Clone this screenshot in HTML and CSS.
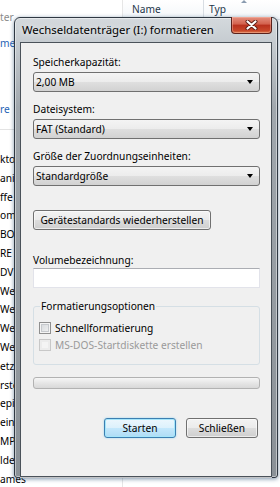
FILE: index.html
```html
<!DOCTYPE html>
<html lang="de">
<head>
    <meta charset="UTF-8">
    <title>Wechseldatenträger (I:) formatieren</title>
    <link rel="stylesheet" href="styles.css">
</head>
<body>

    <!-- Explorer-Fenster im Hintergrund -->
    <div class="explorer">
        <div class="topbar"></div>
        <div class="explorer-body">
            <div class="nav">
                <div class="nav-hint">ter</div>
                <a href="#" class="nav-link link-top">me</a>
                <a href="#" class="nav-link link-bottom">re</a>
                <div class="nav-sep"></div>
                <ul class="nav-list">
                    <li>kto</li>
                    <li>ani</li>
                    <li>ffe</li>
                    <li>om</li>
                    <li>BO</li>
                    <li>RE</li>
                    <li>DV</li>
                    <li>We</li>
                    <li>We</li>
                    <li>We</li>
                    <li>We</li>
                    <li>etz</li>
                    <li>rste</li>
                    <li>epi</li>
                    <li>ein</li>
                    <li>MP</li>
                    <li>lde</li>
                    <li>ames</li>
                </ul>
            </div>
            <div class="files">
                <div class="col-head">
                    <div class="col col-name">Name</div>
                    <div class="col col-type">Typ<span class="sort"></span></div>
                </div>
            </div>
        </div>
    </div>

    <!-- Formatieren-Dialog -->
    <div class="dialog">
        <div class="titlebar">
            <span class="title">Wechseldatenträger (I:) formatieren</span>
            <button class="close-btn" aria-label="Schließen">
                <svg width="13" height="10" viewBox="0 0 13 10">
                    <path d="M2.5 1.5 L10.5 8.5 M10.5 1.5 L2.5 8.5" stroke="#5a1b14" stroke-width="4" stroke-linecap="round"/>
                    <path d="M2.5 1.5 L10.5 8.5 M10.5 1.5 L2.5 8.5" stroke="#fff" stroke-width="2.2" stroke-linecap="round"/>
                </svg>
            </button>
        </div>

        <div class="client">
            <label class="field-label">Speicherkapazität:</label>
            <div class="combo"><span>2,00 MB</span><span class="arrow"></span></div>

            <label class="field-label">Dateisystem:</label>
            <div class="combo"><span>FAT (Standard)</span><span class="arrow"></span></div>

            <label class="field-label">Größe der Zuordnungseinheiten:</label>
            <div class="combo"><span>Standardgröße</span><span class="arrow"></span></div>

            <button class="btn restore-btn">Gerätestandards wiederherstellen</button>

            <label class="field-label volume-label">Volumebezeichnung:</label>
            <input class="text-input" type="text" value="">

            <div class="group">
                <div class="group-title">Formatierungsoptionen</div>
                <div class="check-row">
                    <span class="checkbox"></span>
                    <span>Schnellformatierung</span>
                </div>
                <div class="check-row disabled">
                    <span class="checkbox"></span>
                    <span>MS-DOS-Startdiskette erstellen</span>
                </div>
            </div>

            <div class="progress"></div>

            <div class="button-row">
                <button class="btn btn-default">Starten</button>
                <button class="btn">Schließen</button>
            </div>
        </div>
    </div>

</body>
</html>
```

FILE: styles.css
```css
body {
    margin: 0;
    width: 280px;
    height: 487px;
    overflow: hidden;
    position: relative;
    background-color: #fff;
    font-family: 'Noto Sans', 'Open Sans', sans-serif;
    font-size: 10.2px;
    color: #000;
}

/* ---------- Explorer im Hintergrund ---------- */

.explorer {
    height: 487px;
    display: flex;
    flex-direction: column;
}

.topbar {
    height: 3px;
    background-color: #18222e;
}

.explorer-body {
    flex: 1;
    display: flex;
}

.nav {
    width: 123px;
    border-right: 1px solid #e6e6e6;
    padding-top: 10px;
    box-sizing: border-box;
    overflow: hidden;
    white-space: nowrap;
}

.nav-hint {
    line-height: 14px;
    color: #8a8a8a;
}

.nav-link {
    display: block;
    line-height: 14px;
    color: #1f63b5;
    text-decoration: none;
}
.nav-link.link-top {
    margin-top: 12px;
}
.nav-link.link-bottom {
    margin-top: 52px;
}

.nav-sep {
    height: 1px;
    background-color: #e3e3e3;
    margin-top: 13px;
}

.nav-list {
    list-style-type: none;
    margin: 20px 0 0 0;
    padding: 0;
}
.nav-list li {
    height: 18.8px;
    line-height: 18.8px;
}

.files {
    flex: 1;
}

.col-head {
    display: flex;
    height: 19px;
    background: linear-gradient(#ffffff, #f3f6f9);
    border-bottom: 1px solid #d8dde3;
}

.col {
    line-height: 19px;
    color: #24364a;
}
.col-name {
    width: 71px;
    padding-left: 9px;
    border-right: 1px solid #d8dde3;
}
.col-type {
    flex: 1;
    padding-left: 5px;
    position: relative;
}
.col-type .sort {
    position: absolute;
    left: 37px;
    top: 0;
    width: 0;
    height: 0;
    border-left: 3px solid transparent;
    border-right: 3px solid transparent;
    border-bottom: 3px solid #8a9bb0;
}

/* ---------- Dialogfenster ---------- */

.dialog {
    position: absolute;
    left: 14px;
    top: 17px;
    width: 264px;
    height: 461px;
    box-sizing: border-box;
    border: 1px solid #2f3842;
    border-radius: 6px 6px 3px 3px;
    background: linear-gradient(#d4d9dd 0, #c6ccd1 24px, #a0a7ad 90px, #8a9197 100%);
    box-shadow: 0 1px 4px rgba(20, 60, 100, 0.55), inset 0 0 0 1px rgba(255, 255, 255, 0.45);
    display: flex;
    flex-direction: column;
}

.titlebar {
    height: 24px;
    display: flex;
    justify-content: space-between;
    align-items: center;
    padding-left: 7px;
}

.title {
    font-size: 11.4px;
    padding-bottom: 1px;
    color: #000;
    text-shadow: 0 0 6px rgba(255, 255, 255, 0.9);
}

.close-btn {
    align-self: flex-start;
    margin-top: -1px;
    margin-right: 5px;
    width: 41px;
    height: 17px;
    padding: 0;
    border: 1px solid #5a211b;
    border-top: none;
    border-radius: 0 0 4px 4px;
    background: linear-gradient(#e4907f 0, #d2604c 45%, #b8301d 50%, #c8472a 85%, #dc7a4a 100%);
    box-shadow: inset 0 0 0 1px rgba(255, 200, 185, 0.4);
    display: flex;
    align-items: center;
    justify-content: center;
}

.client {
    flex: 1;
    margin: 0 5px 0 5px;
    border: 1px solid #4a525a;
    background-color: #f0f0f0;
    box-shadow: 0 1px 0 rgba(255, 255, 255, 0.7);
    padding: 12px 11px 0 12px;
    display: flex;
    flex-direction: column;
}

.field-label {
    display: block;
    line-height: 14px;
    margin-top: 10px;
}
.field-label:first-child {
    margin-top: 0;
}

.combo {
    margin-top: 3px;
    height: 20px;
    box-sizing: border-box;
    border: 1px solid #707070;
    border-radius: 3px;
    background: linear-gradient(#f4f4f4 0, #ececec 50%, #dfdfdf 50%, #d2d2d2 100%);
    display: flex;
    align-items: center;
    justify-content: space-between;
    padding: 0 6px 0 2px;
}

.combo .arrow {
    width: 0;
    height: 0;
    border-left: 3.5px solid transparent;
    border-right: 3.5px solid transparent;
    border-top: 4px solid #000;
}

.btn {
    font-family: 'Noto Sans', 'Open Sans', sans-serif;
    font-size: 10.2px;
    color: #000;
    height: 20px;
    padding: 0;
    border: 1px solid #707070;
    border-radius: 3px;
    background: linear-gradient(#f3f3f3 0, #ebebeb 50%, #dddddd 50%, #cfcfcf 100%);
    box-shadow: inset 0 0 0 1px rgba(255, 255, 255, 0.6);
}

.restore-btn {
    margin-top: 24px;
    width: 178px;
}

.field-label.volume-label {
    margin-top: 23px;
}

.text-input {
    margin-top: 1px;
    height: 20px;
    box-sizing: border-box;
    border: 1px solid #e2e3ea;
    border-top-color: #abadb3;
    background-color: #fff;
}

.group {
    margin-top: 18px;
    border: 1px solid #d5dfe5;
    border-radius: 3px;
    padding: 0 0 11px 5px;
    display: flex;
    flex-direction: column;
}

.group-title {
    align-self: flex-start;
    margin: -8px 0 0 1px;
    padding: 0 1px;
    line-height: 14px;
    background-color: #f0f0f0;
}

.group-title + .check-row {
    margin-top: 6px;
}

.check-row {
    display: flex;
    align-items: center;
    height: 17px;
    gap: 4px;
}

.checkbox {
    width: 12px;
    height: 12px;
    box-sizing: border-box;
    border: 1px solid #8f8f8f;
    background: linear-gradient(135deg, #d3d6da 0, #f4f4f4 100%);
    box-shadow: inset 0 0 0 1px #f4f4f4, inset 0 0 0 2px #c6c9cd;
}

.check-row.disabled {
    color: #9a9a9a;
}
.check-row.disabled .checkbox {
    border-color: #c8c8c8;
    background: #f4f4f4;
    box-shadow: inset 0 0 0 2px #ececec;
}

.progress {
    margin-top: 12px;
    height: 12px;
    box-sizing: border-box;
    border: 1px solid #b2b2b2;
    border-radius: 3px;
    background: linear-gradient(#f6f6f6 0, #e6e6e6 50%, #d8d8d8 100%);
}

.button-row {
    margin-top: 29px;
    display: flex;
    justify-content: flex-end;
    gap: 10px;
    padding-right: 2px;
}
.button-row .btn {
    width: 72px;
}

.btn-default {
    border-color: #3c7fb1;
    background: linear-gradient(#ecf7fd 0, #dcf1fc 50%, #c4e8fc 50%, #aedcf5 100%);
    box-shadow: inset 0 0 0 1px #a5e6fb, 0 0 2px rgba(80, 190, 240, 0.6);
}
```
